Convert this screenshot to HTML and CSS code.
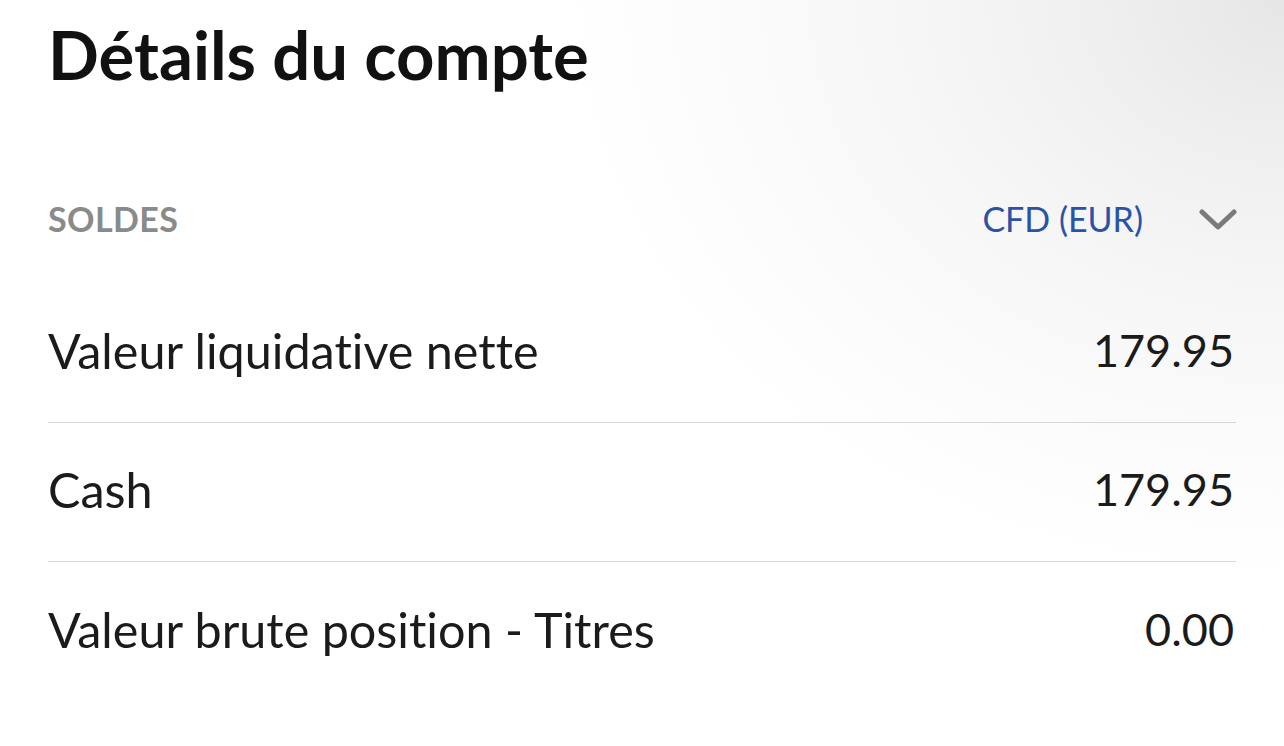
FILE: index.html
```html
<!DOCTYPE html>
<html lang="fr">
<head>
<meta charset="utf-8">
<title>Détails du compte</title>
<link rel="stylesheet" href="styles.css">
</head>
<body>
<main class="page">
  <h1 class="title">Détails du compte</h1>
  <section class="balances">
    <div class="balances-header">
      <span class="section-label">SOLDES</span>
      <button class="account-select" type="button">
        <span class="account-name">CFD (EUR)</span>
        <svg class="chevron" width="38" height="22" viewBox="0 0 38 22" aria-hidden="true">
          <polyline points="3,3 19,18 35,3" fill="none" stroke="#7a7a7a" stroke-width="5" stroke-linecap="round" stroke-linejoin="round"/>
        </svg>
      </button>
    </div>
    <ul class="rows">
      <li class="row"><span class="row-label">Valeur liquidative nette</span><span class="row-value">179.95</span></li>
      <li class="row"><span class="row-label">Cash</span><span class="row-value">179.95</span></li>
      <li class="row"><span class="row-label">Valeur brute position - Titres</span><span class="row-value">0.00</span></li>
    </ul>
  </section>
</main>
</body>
</html>
```

FILE: styles.css
```css
html, body {
  margin: 0;
  padding: 0;
}

body {
  width: 1284px;
  height: 746px;
  overflow: hidden;
  font-family: "Lato", "Open Sans", sans-serif;
  font-variant-ligatures: none;
  color: #1b1b1b;
  background:
    radial-gradient(ellipse 720px 580px at 100% 0%, #e6e6e6 0%, #efefef 25%, #f7f7f7 55%, #ffffff 100%);
  background-color: #ffffff;
}

.page {
  padding: 0 48px;
}

.title {
  margin: 0;
  padding-top: 14px;
  height: 80px;
  line-height: 80px;
  font-size: 67px;
  font-weight: 700;
  color: #111;
}

.balances {
  margin-top: 86px;
}

.balances-header {
  display: flex;
  justify-content: space-between;
  align-items: center;
  box-sizing: border-box;
  height: 80px;
  padding-bottom: 4px;
}

.section-label {
  font-size: 34px;
  font-weight: 700;
  color: #8a8a8a;
  letter-spacing: 0.4px;
}

.account-select {
  display: flex;
  align-items: center;
  gap: 56px;
  padding: 0;
  border: 0;
  background: none;
  font: inherit;
  cursor: pointer;
}

.account-name {
  font-size: 34px;
  color: #2a52a6;
}

.chevron {
  display: block;
  margin-top: 4px;
  margin-right: -1px;
}

.rows {
  list-style: none;
  margin: 24px 0 0;
  padding: 0;
}

.row {
  display: flex;
  justify-content: space-between;
  align-items: center;
  box-sizing: border-box;
  height: 139px;
  padding-bottom: 6px;
  border-bottom: 1px solid #d8d8d8;
  font-size: 48.5px;
}

.row:last-child {
  border-bottom: 0;
}

.row-value {
  font-size: 45px;
  margin-right: 2px;
}
```
